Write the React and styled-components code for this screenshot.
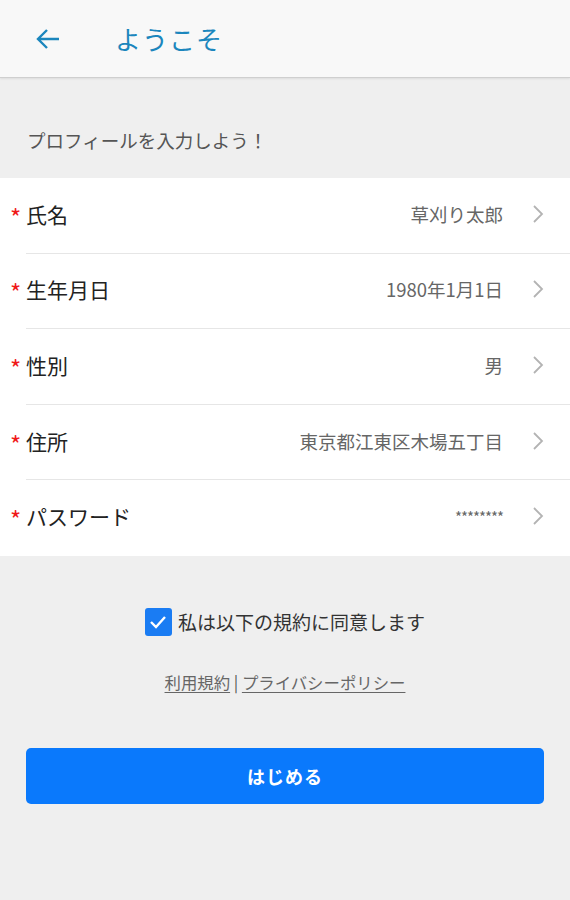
import React from "react"
import styled, { createGlobalStyle } from "styled-components"

const GlobalStyle = createGlobalStyle`
  html, body {
    margin: 0;
    padding: 0;
    background: #efefef;
  }
  body {
    font-family: "Noto Sans CJK JP", "Noto Sans", sans-serif;
  }
`

const Page = styled.div`
  width: 570px;
  min-height: 900px;
  background: #efefef;
  display: flex;
  flex-direction: column;
`

const Header = styled.header`
  height: 78px;
  background: #f8f8f8;
  border-bottom: 1px solid #cfcfcf;
  box-shadow: 0 1px 2px rgba(0, 0, 0, 0.08);
  display: flex;
  align-items: center;
  padding-left: 35px;
  box-sizing: border-box;
`

const BackButton = styled.button`
  border: 0;
  background: none;
  padding: 0;
  width: 26px;
  height: 26px;
  display: flex;
  align-items: center;
  justify-content: center;
  cursor: pointer;
`

const Title = styled.h1`
  margin: 0 0 0 54px;
  font-size: 26px;
  font-weight: 400;
  color: #1b86bd;
  letter-spacing: 1px;
`

const Lead = styled.p`
  margin: 0;
  padding: 0 27px;
  height: 100px;
  display: flex;
  align-items: center;
  padding-top: 23px;
  box-sizing: border-box;
  font-size: 18.5px;
  color: #555;
`

const List = styled.ul`
  list-style: none;
  margin: 0;
  padding: 0;
  background: #fff;
`

const Row = styled.li`
  height: 75.6px;
  display: flex;
  align-items: center;
  position: relative;
  padding: 0 26px 4px 10px;
  box-sizing: border-box;

  &:not(:last-child)::after {
    content: "";
    position: absolute;
    left: 26px;
    right: 0;
    bottom: 0;
    height: 1px;
    background: #e6e6e6;
  }
`

const Required = styled.span`
  color: #f01818;
  font-size: 24px;
  width: 16px;
  line-height: 1;
  margin-top: 6px;
`

const Label = styled.span`
  font-size: 21px;
  color: #222;
  flex: 1;
`

const Value = styled.span`
  font-size: ${p => (p.$masked ? "15px" : "18.5px")};
  color: #666;
  margin-right: 29px;
  letter-spacing: ${p => (p.$masked ? "-1px" : "0")};
`

const Agree = styled.label`
  display: flex;
  align-items: center;
  justify-content: center;
  gap: 6px;
  margin-top: 52px;
  font-size: 19px;
  color: #333;
`

const CheckBox = styled.span`
  width: 27px;
  height: 28px;
  border-radius: 3px;
  background: #1a7cf3;
  display: flex;
  align-items: center;
  justify-content: center;
`

const Links = styled.div`
  margin-top: 34px;
  text-align: center;
  font-size: 16.4px;
  color: #555;
`

const TextLink = styled.a`
  color: #666;
  text-decoration: underline;
  text-underline-offset: 3px;
`

const StartButton = styled.button`
  margin: 54px 26px 0;
  height: 56px;
  border: 0;
  border-radius: 5px;
  background: #0a79fc;
  color: #fff;
  font-family: inherit;
  font-size: 18px;
  font-weight: 700;
  letter-spacing: 1px;
  cursor: pointer;
`

const Chevron = () => (
  <svg width="12" height="20" viewBox="0 0 12 20">
    <path d="M2 2 L10 10 L2 18" fill="none" stroke="#b3b3b3" strokeWidth="1.8" />
  </svg>
)

const fields = [
  { label: "氏名", value: "草刈り太郎" },
  { label: "生年月日", value: "1980年1月1日" },
  { label: "性別", value: "男" },
  { label: "住所", value: "東京都江東区木場五丁目" },
  { label: "パスワード", value: "********", masked: true },
]

export default function App() {
  return (
    <Page>
      <GlobalStyle />
      <Header>
        <BackButton aria-label="戻る">
          <svg width="24" height="22" viewBox="0 0 24 22">
            <path d="M23 11 H3 M11 2 L2 11 L11 20" fill="none" stroke="#1b86bd" strokeWidth="2.4" />
          </svg>
        </BackButton>
        <Title>ようこそ</Title>
      </Header>
      <Lead>プロフィールを入力しよう！</Lead>
      <List>
        {fields.map(f => (
          <Row key={f.label}>
            <Required>*</Required>
            <Label>{f.label}</Label>
            <Value $masked={f.masked}>{f.value}</Value>
            <Chevron />
          </Row>
        ))}
      </List>
      <Agree>
        <CheckBox>
          <svg width="18" height="14" viewBox="0 0 18 14">
            <path d="M2 7 L7 12 L16 2" fill="none" stroke="#fff" strokeWidth="2.4" />
          </svg>
        </CheckBox>
        私は以下の規約に同意します
      </Agree>
      <Links>
        <TextLink>利用規約</TextLink> | <TextLink>プライバシーポリシー</TextLink>
      </Links>
      <StartButton>はじめる</StartButton>
    </Page>
  )
}
